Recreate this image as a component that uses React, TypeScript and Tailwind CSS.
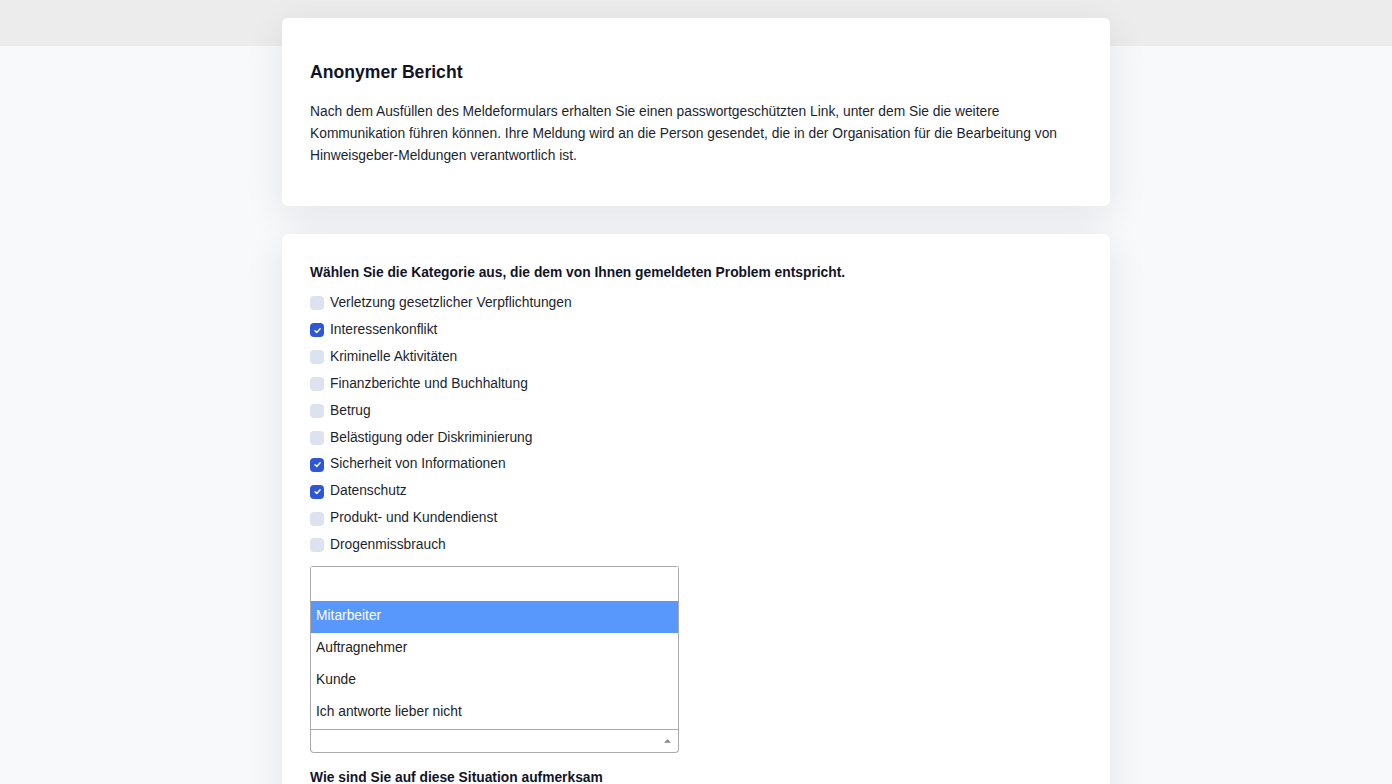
import React from "react";

const items: { label: string; checked: boolean }[] = [
  { label: "Verletzung gesetzlicher Verpflichtungen", checked: false },
  { label: "Interessenkonflikt", checked: true },
  { label: "Kriminelle Aktivitäten", checked: false },
  { label: "Finanzberichte und Buchhaltung", checked: false },
  { label: "Betrug", checked: false },
  { label: "Belästigung oder Diskriminierung", checked: false },
  { label: "Sicherheit von Informationen", checked: true },
  { label: "Datenschutz", checked: true },
  { label: "Produkt- und Kundendienst", checked: false },
  { label: "Drogenmissbrauch", checked: false },
  { label: "Umwelt und Nachhaltigkeit", checked: false },
];

const options = ["Mitarbeiter", "Auftragnehmer", "Kunde", "Ich antworte lieber nicht"];

function Box({ checked }: { checked: boolean }) {
  return checked ? (
    <span className="flex h-[14px] w-[14px] shrink-0 items-center justify-center rounded-[4px] bg-[#2d57d6]">
      <svg width="9" height="9" viewBox="0 0 10 10" fill="none">
        <path d="M2.2 5.2 L4.2 7.1 L7.9 3.1" stroke="white" strokeWidth="1.6" strokeLinecap="round" strokeLinejoin="round" />
      </svg>
    </span>
  ) : (
    <span className="h-[14px] w-[14px] shrink-0 rounded-[4px] bg-[#dde3ee]" />
  );
}

export default function App() {
  return (
    <div
      className="min-h-[784px] bg-[#f8f9fb] text-[#1c1f2e]"
      style={{ fontFamily: '"Liberation Sans", Arial, sans-serif' }}
    >
      <div className="h-[46px] bg-[#ececec]" />
      <div className="-mt-[28px] flex flex-col items-center gap-[28px] pb-10">
        <section className="w-[828px] rounded-[6px] bg-white px-[28px] pb-[39px] pt-[40px] shadow-[0_10px_40px_rgba(17,24,39,0.09)]">
          <h1 className="text-[17.6px] font-bold leading-[28px] text-[#111427]">Anonymer Bericht</h1>
          <p className="mt-[15px] text-[13.8px] leading-[22px]">
            Nach dem Ausfüllen des Meldeformulars erhalten Sie einen passwortgeschützten Link, unter dem Sie die weitere
            Kommunikation führen können. Ihre Meldung wird an die Person gesendet, die in der Organisation für die Bearbeitung von
            Hinweisgeber-Meldungen verantwortlich ist.
          </p>
        </section>

        <section className="w-[828px] rounded-[6px] bg-white px-[28px] pb-[40px] pt-[29px] shadow-[0_10px_40px_rgba(17,24,39,0.09)]">
          <h2 className="text-[13.8px] font-bold leading-[20px] text-[#111427]">
            Wählen Sie die Kategorie aus, die dem von Ihnen gemeldeten Problem entspricht.
          </h2>
          <ul className="mt-[7px] flex flex-col">
            {items.map((it, i) => (
              <li
                key={it.label}
                className={
                  i === items.length - 1
                    ? "mt-[2px] flex h-[26.9px] items-center gap-[6px] text-[13.8px]"
                    : "flex h-[26.9px] items-center gap-[6px] text-[13.8px]"
                }
              >
                <Box checked={it.checked} />
                <span>{it.label}</span>
              </li>
            ))}
          </ul>

          <div className="relative mt-[142px] w-[369px]">
            <div className="absolute bottom-full left-0 z-10 w-full rounded-t-[3px] border border-b-0 border-[#aaaaaa] bg-white">
              <div className="h-[34px] bg-white" />
              <ul className="border-b border-[#aaaaaa] text-[13.8px]">
                {options.map((o, i) => (
                  <li
                    key={o}
                    className={
                      i === 0
                        ? "flex h-[32px] items-center bg-[#5897fb] px-[5px] text-white"
                        : "flex h-[32px] items-center px-[5px] text-[#222]"
                    }
                  >
                    {o}
                  </li>
                ))}
              </ul>
            </div>
            <div className="flex h-[23px] items-center justify-end rounded-b-[4px] border border-t-0 border-[#aaaaaa] bg-white pr-[7px]">
              <svg width="7" height="4" viewBox="0 0 8 4">
                <path d="M0 4 L4 0 L8 4 Z" fill="#888" />
              </svg>
            </div>
          </div>

          <h2 className="mt-[15px] max-w-[360px] text-[13.8px] font-bold leading-[20px] text-[#111427]">
            Wie sind Sie auf diese Situation aufmerksam geworden?
          </h2>
        </section>
      </div>
    </div>
  );
}
